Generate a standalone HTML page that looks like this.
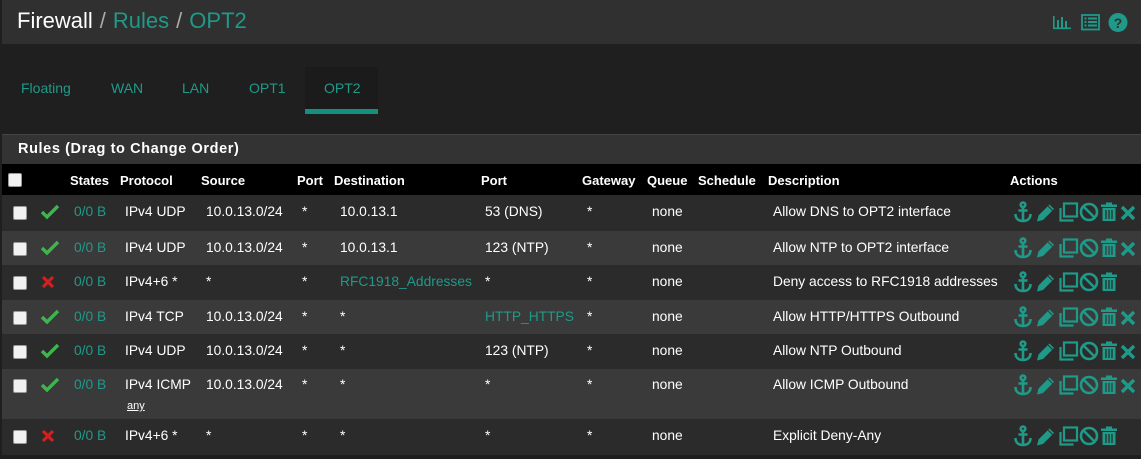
<!DOCTYPE html>
<html><head><style>
*{margin:0;padding:0;box-sizing:border-box}
body{width:1141px;height:459px;background:#1f1f1f;font-family:"Liberation Sans",sans-serif;color:#fff;position:relative;overflow:hidden;font-size:13.8px}
.top{position:absolute;left:2px;top:0;width:1139px;height:44px;background:#303030}
.title{position:absolute;left:17px;top:8px;font-size:22px;color:#fff}
.title .t{color:#1f9a89}
.title .s{color:#aaa;margin:0 7px}
.tabs{position:absolute;top:80px;font-size:14px;color:#1f9a89}
.tabact{position:absolute;left:305px;top:67px;width:73px;height:47px;background:#1b1b1b}
.tabbar{position:absolute;left:305px;top:109px;width:73px;height:5px;background:#14907f}
.panel{position:absolute;left:2px;top:134px;width:1139px;height:30px;background:#333;border-top:1px solid #444}
.panel span{position:absolute;left:16px;top:6px;font-weight:bold;font-size:14.5px;letter-spacing:.6px}
.hdr{position:absolute;left:2px;top:164px;width:1139px;height:31px;background:#000}
.c{position:absolute;white-space:nowrap}
.h{font-weight:bold;top:173px;font-size:13px}
.row{position:absolute;left:2px;width:1139px}
.cb{position:absolute;width:14px;height:14px;background:#f2f2f2;border:1px solid #999;border-radius:2px}
.g{color:#1f9a89}
</style></head><body>
<div class="top"></div>
<div class="title">Firewall<span class="s">/</span><span class="t">Rules</span><span class="s">/</span><span class="t">OPT2</span></div>
<svg style="position:absolute;left:1052px;top:12px" width="80" height="22" viewBox="0 0 80 22" fill="#1f9a89">
<rect x="1" y="4" width="1.6" height="13"/><rect x="1" y="15.5" width="18" height="1.6"/><rect x="5" y="8" width="2" height="7.5"/><rect x="9" y="5" width="2" height="10.5"/><rect x="13" y="9" width="2" height="6.5"/>
<rect x="30" y="3" width="17" height="14.5" fill="none" stroke="#1f9a89" stroke-width="1.8"/><rect x="32.5" y="5.5" width="2" height="2"/><rect x="36" y="5.5" width="9" height="2"/><rect x="32.5" y="9" width="2" height="2"/><rect x="36" y="9" width="9" height="2"/><rect x="32.5" y="12.5" width="2" height="2"/><rect x="36" y="12.5" width="9" height="2"/>
<circle cx="66" cy="10.5" r="9.5"/><text x="66" y="16" font-size="14" font-weight="bold" fill="#303030" text-anchor="middle" font-family="Liberation Sans">?</text>
</svg>
<div class="tabact"></div><div class="tabbar"></div>
<div class="tabs" style="left:21px">Floating</div>
<div class="tabs" style="left:111px">WAN</div>
<div class="tabs" style="left:182px">LAN</div>
<div class="tabs" style="left:249px">OPT1</div>
<div class="tabs" style="left:324px">OPT2</div>
<div class="panel"><span>Rules (Drag to Change Order)</span></div>
<div class="hdr"></div>
<div class="cb" style="left:8px;top:173px"></div>
<div class="c h" style="left:70px">States</div><div class="c h" style="left:120px">Protocol</div><div class="c h" style="left:201px">Source</div><div class="c h" style="left:297px">Port</div><div class="c h" style="left:334px">Destination</div><div class="c h" style="left:481px">Port</div><div class="c h" style="left:582px">Gateway</div><div class="c h" style="left:647px">Queue</div><div class="c h" style="left:698px">Schedule</div><div class="c h" style="left:768px">Description</div><div class="c h" style="left:1010px">Actions</div>
<div id="rows"></div>
<script>
const rows=[
[195,36,'#2b2b2b',1,'IPv4 UDP','10.0.13.0/24','*','10.0.13.1','53 (DNS)','Allow DNS to OPT2 interface',1,0,0],
[231,34,'#3a3a3a',1,'IPv4 UDP','10.0.13.0/24','*','10.0.13.1','123 (NTP)','Allow NTP to OPT2 interface',1,0,0],
[265,35,'#2b2b2b',0,'IPv4+6 *','*','*','RFC1918_Addresses','*','Deny access to RFC1918 addresses',0,1,0],
[300,34,'#3a3a3a',1,'IPv4 TCP','10.0.13.0/24','*','*','HTTP_HTTPS','Allow HTTP/HTTPS Outbound',1,0,1],
[334,35,'#2b2b2b',1,'IPv4 UDP','10.0.13.0/24','*','*','123 (NTP)','Allow NTP Outbound',1,0,0],
[369,50,'#3a3a3a',1,'IPv4 ICMP','10.0.13.0/24','*','*','*','Allow ICMP Outbound',1,0,0],
[419,36,'#2b2b2b',0,'IPv4+6 *','*','*','*','*','Explicit Deny-Any',0,0,0]];
const icons=`<svg width="125" height="22" viewBox="0 0 125 22" fill="#1f9a89" stroke="#1f9a89">
<g stroke-width="2.6" fill="none"><circle cx="9" cy="3.8" r="2.3"/><path d="M9 6V20M4.5 9.5h9M1.5 13c0 4.5 3 7 7.5 7s7.5-2.5 7.5-7"/></g>
<path stroke="none" d="M23 20.5l1.5-6 11-11 4.5 4.5-11 11z"/><path d="M34 5l4.5 4.5" stroke="#2b2b2b" stroke-width="1"/>
<g fill="none" stroke-width="2.2"><rect x="50" y="2.5" width="13" height="13"/><path d="M46.5 7v12.5h13"/></g>
<g fill="none" stroke-width="2.6"><circle cx="75" cy="11" r="8"/><path d="M69.5 5.5l11 11"/></g>
<path stroke="none" d="M87 3.5h16v2.5H87zM92 1.5h6v2h-6zM88.5 7h13v13h-13z"/>
<path stroke="#2b2b2b" stroke-width="1.3" d="M92 9v9M95 9v9M98 9v9"/>
XX</svg>`;
let h='';
rows.forEach((r,i)=>{const [y,ht,bg,ok,pr,src,sp,dst,dp,desc,x,dstg,dpg]=r;const t=y+(i===5?8:9);
h+=`<div class="row" style="top:${y}px;height:${ht}px;background:${bg}"></div>`;
h+=`<div class="cb" style="left:13px;top:${t+2}px"></div>`;
h+=ok?`<svg class="c" style="left:40px;top:${t}px" width="20" height="16" viewBox="0 0 20 16"><path d="M2 8l5 5L18 2" fill="none" stroke="#3eb54d" stroke-width="3.4"/></svg>`:`<svg class="c" style="left:41px;top:${t+1}px" width="14" height="14" viewBox="0 0 14 14"><path d="M2 2l10 10M12 2L2 12" stroke="#d02020" stroke-width="3.2"/></svg>`;
h+=`<div class="c g" style="left:74px;top:${t}px">0/0 B</div><div class="c" style="left:125px;top:${t}px">${pr}</div><div class="c" style="left:206px;top:${t}px">${src}</div><div class="c" style="left:302px;top:${t}px">${sp}</div><div class="c ${dstg?'g':''}" style="left:340px;top:${t}px">${dst}</div><div class="c ${dpg?'g':''}" style="left:485px;top:${t}px">${dp}</div><div class="c" style="left:587px;top:${t}px">*</div><div class="c" style="left:652px;top:${t}px">none</div><div class="c" style="left:773px;top:${t}px">${desc}</div>`;
h+=`<div class="c" style="left:1014px;top:${t-3}px">${icons.replace(/#2b2b2b/g,bg).replace('XX',x?'<path d="M108 6l12 12M120 6l-12 12" stroke-width="3.4" fill="none"/>':'')}</div>`;
if(i===5)h+=`<div class="c" style="left:127px;top:400px;font-size:11px;text-decoration:underline">any</div>`;
});
document.getElementById('rows').innerHTML=h;
</script>
</body></html>
